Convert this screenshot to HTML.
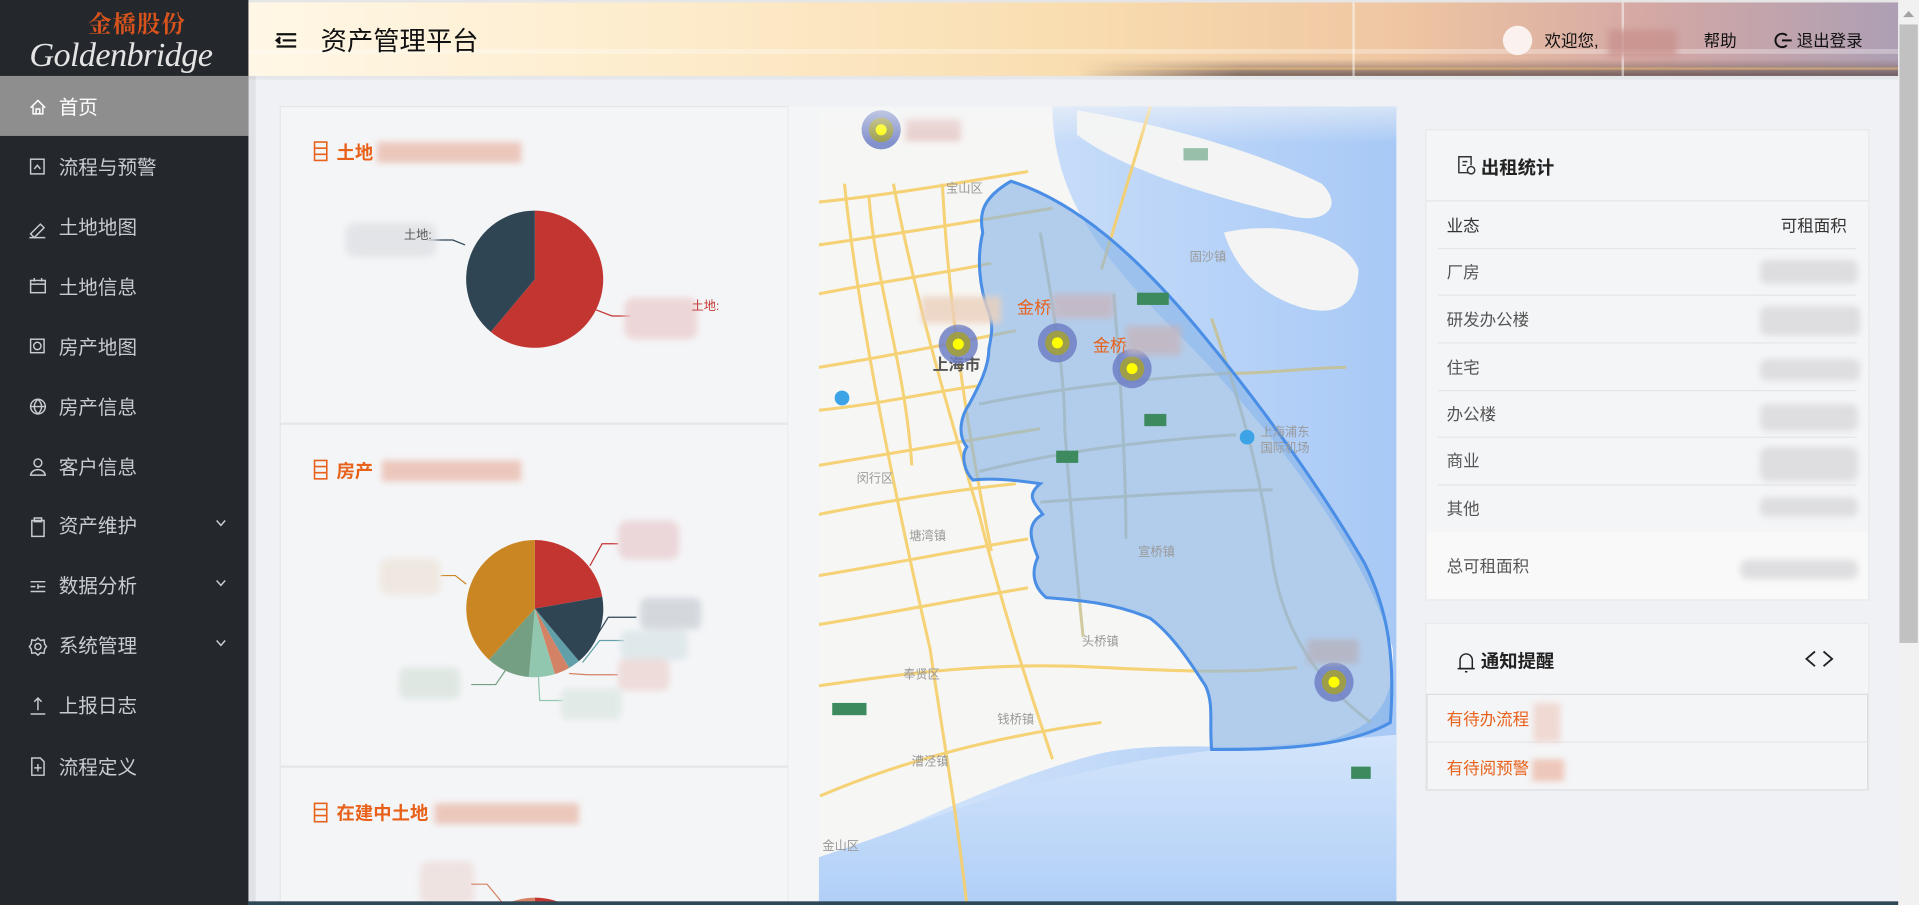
<!DOCTYPE html>
<html><head><meta charset="utf-8"><style>
html,body{margin:0;padding:0;width:1919px;height:905px;overflow:hidden;background:#f0f1f4}
svg{display:block}
text{font-family:"Liberation Sans","Noto Sans CJK SC",sans-serif}
</style></head><body>
<svg width="1919" height="905" viewBox="0 0 1568 739" preserveAspectRatio="none" xmlns="http://www.w3.org/2000/svg">
<defs>
<linearGradient id="hdr" x1="0" x2="1" y1="0" y2="0">
<stop offset="0" stop-color="#fff7e6"/><stop offset="0.25" stop-color="#fdeccc"/><stop offset="0.5" stop-color="#f9ddb0"/><stop offset="0.7" stop-color="#efc6a2"/><stop offset="0.85" stop-color="#d4a8a4"/><stop offset="1" stop-color="#ad9fb4"/></linearGradient>
<linearGradient id="city" x1="0" x2="0" y1="0" y2="1"><stop offset="0" stop-color="#8a6f6a" stop-opacity="0"/><stop offset="0.6" stop-color="#7a6460" stop-opacity="0.6"/><stop offset="1" stop-color="#5a4a4a" stop-opacity="0.8"/></linearGradient>
<linearGradient id="cityfade" x1="0" x2="1" y1="0" y2="0"><stop offset="0" stop-color="#fff" stop-opacity="0"/><stop offset="0.2" stop-color="#fff" stop-opacity="1"/></linearGradient>
<mask id="cm"><rect x="880" y="0" width="671" height="62" fill="url(#cityfade)"/></mask>
<linearGradient id="sea" x1="0" x2="1" y1="0" y2="0"><stop offset="0" stop-color="#dbe9fb"/><stop offset="1" stop-color="#a8c9f6"/></linearGradient>
<linearGradient id="seab" x1="0" x2="0" y1="0" y2="1"><stop offset="0" stop-color="#d4e5fb"/><stop offset="1" stop-color="#b0cff7"/></linearGradient>
<linearGradient id="fadeT" x1="0" x2="0" y1="0" y2="1"><stop offset="0" stop-color="#f4f5f7" stop-opacity="1"/><stop offset="1" stop-color="#f4f5f7" stop-opacity="0"/></linearGradient>
<filter id="bl" x="-30%" y="-30%" width="160%" height="160%"><feGaussianBlur stdDeviation="2.5"/></filter>
</defs>

<rect x="0" y="0" width="1568" height="739" fill="#f0f1f4"/>

<!-- header -->
<rect x="203" y="0" width="1348" height="62" fill="url(#hdr)"/>
<rect x="203" y="40" width="1348" height="4" fill="#fff" opacity="0.3"/>
<g mask="url(#cm)">
<rect x="880" y="48" width="671" height="14" fill="url(#city)"/>
<rect x="880" y="55" width="671" height="2" fill="#f0c070" opacity="0.5"/>
</g>
<rect x="1105" y="0" width="2" height="62" fill="#fff" opacity="0.5"/>
<rect x="1325" y="0" width="2" height="62" fill="#fff" opacity="0.5"/>
<rect x="203" y="0" width="1348" height="2" fill="#e6e6e6"/>
<rect x="203" y="62" width="1348" height="3" fill="#000" opacity="0.04"/>
<g stroke="#111" stroke-width="1.8" fill="none"><line x1="226" y1="28" x2="242" y2="28"/><line x1="231" y1="33" x2="242" y2="33"/><line x1="226" y1="38" x2="242" y2="38"/><path d="M229 30.5 L226 33 L229 35.5" fill="#111"/></g>
<text x="262" y="41" font-size="21.5" fill="#111">资产管理平台</text>
<circle cx="1240" cy="33" r="12" fill="#fbf2f0"/>
<text x="1262" y="38" font-size="13.5" fill="#111">欢迎您,</text>
<rect x="1314" y="24" width="56" height="22" fill="#c9928e" filter="url(#bl)" opacity="0.8"/>
<text x="1392" y="38" font-size="13.5" fill="#111">帮助</text>
<path d="M1460 29 A5.5 5.5 0 1 0 1460 37" stroke="#111" stroke-width="1.6" fill="none"/><line x1="1456" y1="33" x2="1464" y2="33" stroke="#111" stroke-width="1.6"/>
<text x="1468" y="38" font-size="13.5" fill="#111">退出登录</text>

<!-- scrollbar -->
<rect x="1551" y="0" width="17" height="739" fill="#f1f1f1"/>
<rect x="1552" y="20" width="15" height="505" fill="#c1c1c1"/>
<path d="M1555 14 L1559.5 9 L1564 14 Z" fill="#a3a3a3"/>

<!-- sidebar -->
<rect x="0" y="0" width="203" height="739" fill="#24282d"/>
<rect x="203" y="62" width="6" height="677" fill="#000" opacity="0.06"/>
<text x="72" y="26" font-size="19" font-weight="bold" fill="#d9531c" style="font-family:'Noto Serif CJK SC','Liberation Serif',serif" letter-spacing="1">金橋股份</text>
<text x="24" y="54" font-size="28" font-style="italic" fill="#e4e4e4" style="font-family:'Liberation Serif',serif" letter-spacing="-0.5">Goldenbridge</text>
<rect x="0" y="62" width="203" height="49" fill="#8e8e8e"/>
<g font-size="16" fill="#c8cbcf">
<text x="48" y="93" fill="#fff">首页</text>
<text x="48" y="142">流程与预警</text>
<text x="48" y="191">土地地图</text>
<text x="48" y="240">土地信息</text>
<text x="48" y="289">房产地图</text>
<text x="48" y="338">房产信息</text>
<text x="48" y="387">客户信息</text>
<text x="48" y="435">资产维护</text>
<text x="48" y="484">数据分析</text>
<text x="48" y="533">系统管理</text>
<text x="48" y="582">上报日志</text>
<text x="48" y="632">流程定义</text>
</g>
<g stroke="#c8cbcf" stroke-width="1.2" fill="none">
<path d="M25 88 L31 82 L37 88 M27 87 V93 H35 V87 M29.5 93 V89 H32.5 V93" stroke="#fff"/>
<rect x="25" y="130" width="11" height="12"/><path d="M28 138 L30.5 135 L33 138"/>
<path d="M25 191 L33 183 L36 186 L28 194 Z M24 194 H37"/>
<rect x="25" y="229" width="12" height="10"/><path d="M25 232 H37 M28 227 V230 M34 227 V230"/>
<rect x="25" y="277" width="11" height="11"/><circle cx="30.5" cy="282.5" r="3"/>
<circle cx="31" cy="332" r="6"/><path d="M25 332 H37 M31 326 C27 330 27 334 31 338 C35 334 35 330 31 326"/>
<circle cx="31" cy="378" r="3.2"/><path d="M25 388 C26 382 36 382 37 388 Z"/>
<rect x="26" y="425" width="10" height="13"/><path d="M28 423 H34 V426 H28 Z"/>
<path d="M25 475 H37 M25 479 H29 M31 479 H37 M25 483 H37 M31 477 V481"/>
<circle cx="31" cy="528" r="2.5"/><path d="M31 521 L33 523 L36 522.5 L36.5 526 L38 528 L36.5 530 L36 533.5 L33 533 L31 535 L29 533 L26 533.5 L25.5 530 L24 528 L25.5 526 L26 522.5 L29 523 Z"/>
<path d="M31 570 V580 M28 573 L31 570 L34 573 M25 583 H37"/>
<path d="M26 619 H33 L36 622 V633 H26 Z M31 624 V630 M28 627 H34"/>
<path d="M177 425 L180.5 429 L184 425 M177 474 L180.5 478 L184 474 M177 523 L180.5 527 L184 523"/>
</g>

<!-- left charts card -->
<rect x="229" y="87" width="415" height="652" fill="#f4f5f7" stroke="#e5e6e8"/>
<rect x="229" y="345" width="415" height="2" fill="#e6e7ea"/>
<rect x="229" y="625" width="415" height="2" fill="#e6e7ea"/>
<g stroke="#e8611a" stroke-width="1.3" fill="none">
<rect x="257" y="116" width="10" height="15"/><path d="M257 121 H267 M257 126 H267"/>
<rect x="257" y="376" width="10" height="15"/><path d="M257 381 H267 M257 386 H267"/>
<rect x="257" y="656" width="10" height="15"/><path d="M257 661 H267 M257 666 H267"/>
</g>
<g font-size="15" font-weight="bold" fill="#e8611a">
<text x="275" y="130">土地</text><text x="275" y="390">房产</text><text x="275" y="669">在建中土地</text>
</g>
<g filter="url(#bl)" opacity="0.75">
<rect x="308" y="116" width="118" height="17" fill="#e9b8a8"/>
<rect x="312" y="376" width="114" height="17" fill="#e9b8a8"/>
<rect x="355" y="656" width="118" height="17" fill="#e9b8a8"/>
</g>
<path d="M437 228 L437 172 A56 56 0 1 1 401 271 Z" fill="#c23531"/>
<path d="M437 228 L401 271 A56 56 0 0 1 437 172 Z" fill="#2f4554"/>
<path d="M380 200 L370 196 H350" stroke="#2f4554" fill="none"/>
<path d="M487 253 L500 258 H515" stroke="#c23531" fill="none"/>
<g filter="url(#bl)" opacity="0.8">
<rect x="282" y="182" width="75" height="28" rx="8" fill="#dfe1e4"/>
<rect x="510" y="243" width="60" height="34" rx="8" fill="#eccfd0"/>
</g>
<text x="330" y="195" font-size="10" fill="#555">土地:</text>
<text x="565" y="253" font-size="10" fill="#c23531">土地:</text>
<g transform="translate(437 497)">
<path d="M0 0 L0 -56 A56 56 0 0 1 55.1 -9.7 Z" fill="#c23531"/>
<path d="M0 0 L55.1 -9.7 A56 56 0 0 1 36 42.9 Z" fill="#2f4554"/>
<path d="M0 0 L36 42.9 A56 56 0 0 1 28 48.5 Z" fill="#61a0a8"/>
<path d="M0 0 L28 48.5 A56 56 0 0 1 16.4 53.5 Z" fill="#d48265"/>
<path d="M0 0 L16.4 53.5 A56 56 0 0 1 -4.9 55.8 Z" fill="#91c7ae"/>
<path d="M0 0 L-4.9 55.8 A56 56 0 0 1 -37.5 41.6 Z" fill="#749f83"/>
<path d="M0 0 L-37.5 41.6 A56 56 0 0 1 0 -56 Z" fill="#ca8622"/>
</g>
<g fill="none" stroke-width="1">
<path d="M482 462 L492 444 H505" stroke="#c23531"/>
<path d="M487 520 L497 504 H520" stroke="#2f4554"/>
<path d="M476 541 L490 523 H510" stroke="#61a0a8"/>
<path d="M465 550 L480 551 H505" stroke="#d48265"/>
<path d="M440 553 L441 572 H460" stroke="#91c7ae"/>
<path d="M414 546 L405 559 H385" stroke="#749f83"/>
<path d="M381 477 L372 470 H360" stroke="#ca8622"/>
</g>
<g filter="url(#bl)" opacity="0.85">
<rect x="505" y="425" width="50" height="32" rx="8" fill="#ead2d4"/>
<rect x="310" y="456" width="50" height="30" rx="8" fill="#efe6dd"/>
<rect x="523" y="488" width="50" height="26" rx="6" fill="#cfd4d9"/>
<rect x="507" y="515" width="55" height="24" rx="6" fill="#dce6e9"/>
<rect x="505" y="538" width="42" height="26" rx="6" fill="#edd8d5"/>
<rect x="458" y="562" width="50" height="26" rx="6" fill="#dfe9e5"/>
<rect x="326" y="545" width="50" height="26" rx="6" fill="#dce5e0"/>
<rect x="343" y="703" width="45" height="36" rx="8" fill="#eee0de"/>
</g>
<path d="M437 789 L437 733 A56 56 0 0 1 470 744 Z" fill="#c23531"/>
<path d="M437 789 L404 744 A56 56 0 0 1 437 733 Z" fill="#d48265"/>
<path d="M412 739 L398 722 H385" stroke="#d48265" fill="none"/>

<!-- map -->
<clipPath id="mc"><rect x="669" y="87" width="472" height="652"/></clipPath>
<g clip-path="url(#mc)">
<rect x="669" y="87" width="472" height="652" fill="#f6f6f4"/>
<path d="M860 87 L1141 87 L1141 739 L669 739 L669 700 C720 690 800 640 900 615 C950 605 1000 612 1060 610 C1120 600 1140 580 1138 530 C1120 460 1050 360 960 270 C900 210 860 160 860 87 Z" fill="url(#sea)"/>
<path d="M669 739 L669 700 C760 670 860 625 1000 612 L1141 600 L1141 739 Z" fill="url(#seab)"/>
<path d="M880 90 C940 100 1020 120 1080 150 C1100 170 1080 185 1050 175 C990 160 920 140 880 110 Z" fill="#f3f4f3"/>
<path d="M1000 190 C1040 180 1100 190 1110 220 C1110 250 1090 260 1060 250 C1030 240 1010 220 1000 190 Z" fill="#f3f4f3"/>
<g stroke="#f7cf6a" stroke-width="2.5" fill="none" opacity="0.9">
<path d="M669 165 C720 160 780 150 840 140"/>
<path d="M669 200 C740 190 800 180 860 170"/>
<path d="M669 240 C720 230 760 225 810 215"/>
<path d="M669 300 C730 290 780 280 830 270"/>
<path d="M669 335 C720 330 760 320 800 315"/>
<path d="M669 380 C730 370 790 360 850 350"/>
<path d="M669 420 C720 410 780 400 830 395"/>
<path d="M669 470 C730 460 780 450 840 440"/>
<path d="M669 510 C730 500 780 490 840 480"/>
<path d="M669 560 C740 550 810 540 900 545 C960 548 1010 550 1060 545"/>
<path d="M690 150 C700 250 730 400 760 530 C770 600 780 650 790 739"/>
<path d="M710 160 C715 230 740 300 745 380"/>
<path d="M730 150 C745 230 770 320 800 420 C820 500 840 560 860 620"/>
<path d="M770 150 C775 250 790 350 810 450"/>
<path d="M670 650 C740 620 820 600 900 590"/>
<path d="M940 87 L900 220"/>
</g>
<g stroke="#c9c08a" stroke-width="2.5" fill="none" opacity="0.8">
<path d="M800 330 C850 320 920 310 1000 305 C1040 305 1070 300 1100 300"/>
<path d="M800 385 C860 370 930 360 1010 355"/>
<path d="M850 410 C920 405 1000 400 1040 400"/>
<path d="M850 190 C860 250 870 300 870 350 C875 420 880 470 885 520"/>
<path d="M910 240 C915 300 920 380 920 440"/>
<path d="M990 260 C1010 320 1030 380 1040 460 C1050 520 1080 560 1120 590"/>
</g>
<path d="M826 148 C880 165 930 210 980 270 C1030 330 1080 400 1115 460 C1135 500 1140 540 1136 590 C1110 605 1070 612 1000 612 L990 612 C988 590 992 575 985 560 C975 545 960 520 940 505 C910 492 880 490 855 488 C845 480 842 468 848 455 C842 440 838 428 852 420 C845 410 838 405 850 395 C830 392 810 390 795 392 C788 385 785 372 790 365 C782 355 785 340 792 330 C800 315 808 300 808 285 C810 275 812 265 808 255 C800 235 798 210 803 190 C800 175 802 162 826 148 Z" fill="#86b2e6" fill-opacity="0.6" stroke="#4a8ee6" stroke-width="2.5"/>
<g font-size="10" fill="#999">
<text x="773" y="157">宝山区</text><text x="972" y="213">固沙镇</text><text x="700" y="394">闵行区</text>
<text x="743" y="441">塘湾镇</text><text x="930" y="454">宣桥镇</text><text x="884" y="527">头桥镇</text>
<text x="738" y="554">奉贤区</text><text x="815" y="591">钱桥镇</text><text x="745" y="625">漕泾镇</text><text x="672" y="694">金山区</text>
<text x="1030" y="356">上海浦东</text><text x="1030" y="369">国际机场</text>
</g>
<text x="762" y="302" font-size="13" font-weight="bold" fill="#555">上海市</text>
<g fill="#3d8a5e"><rect x="929" y="239" width="26" height="10"/><rect x="935" y="338" width="18" height="10"/><rect x="863" y="368" width="18" height="10"/><rect x="680" y="574" width="28" height="10"/><rect x="1104" y="626" width="16" height="10"/><rect x="967" y="121" width="20" height="10" opacity="0.5"/></g>
<circle cx="688" cy="325" r="6" fill="#3ba3e6"/><circle cx="1019" cy="357" r="6" fill="#3ba3e6"/>
<g>
<circle cx="720" cy="106" r="16" fill="#6e7fc4" opacity="0.85"/><circle cx="720" cy="106" r="10" fill="#9e9e4a"/><circle cx="720" cy="106" r="4.5" fill="#ffff00"/>
<circle cx="783" cy="281" r="16" fill="#6e7fc4" opacity="0.85"/><circle cx="783" cy="281" r="10" fill="#9e9e4a"/><circle cx="783" cy="281" r="4.5" fill="#ffff00"/>
<circle cx="864" cy="280" r="16" fill="#6e7fc4" opacity="0.85"/><circle cx="864" cy="280" r="10" fill="#9e9e4a"/><circle cx="864" cy="280" r="4.5" fill="#ffff00"/>
<circle cx="925" cy="301" r="16" fill="#6e7fc4" opacity="0.85"/><circle cx="925" cy="301" r="10" fill="#9e9e4a"/><circle cx="925" cy="301" r="4.5" fill="#ffff00"/>
<circle cx="1090" cy="557" r="16" fill="#6e7fc4" opacity="0.85"/><circle cx="1090" cy="557" r="10" fill="#9e9e4a"/><circle cx="1090" cy="557" r="4.5" fill="#ffff00"/>
</g>
<g font-size="14" fill="#e8611a"><text x="831" y="256">金桥</text><text x="893" y="287">金桥</text></g>
<g filter="url(#bl)" opacity="0.8">
<rect x="740" y="97" width="45" height="18" fill="#e3c0bd"/>
<rect x="753" y="242" width="65" height="22" fill="#ecd0bc"/>
<rect x="860" y="240" width="50" height="20" fill="#c8b6c0"/>
<rect x="920" y="266" width="45" height="24" fill="#c5b5bd"/>
<rect x="1068" y="522" width="42" height="20" fill="#b6b2be"/>
</g>
<rect x="669" y="87" width="472" height="30" fill="url(#fadeT)" opacity="0.6"/>
</g>
<rect x="644" y="87" width="25" height="652" fill="#f4f5f7"/>

<!-- right rental card -->
<rect x="1165" y="106" width="362" height="384" fill="#f4f5f7" stroke="#e8e9eb"/>
<rect x="1166" y="434" width="360" height="55" fill="#f9f9f9"/>
<line x1="1165" y1="164" x2="1527" y2="164" stroke="#e4e5e7"/>
<g stroke="#333" stroke-width="1.2" fill="none"><path d="M1200 141 H1192 V128 H1202 V135"/><path d="M1195 132 H1199 M1195 135 H1198"/><circle cx="1202" cy="139" r="3"/></g>
<text x="1210" y="142" font-size="15" font-weight="bold" fill="#222">出租统计</text>
<g stroke="#e4e5e7" stroke-width="1">
<line x1="1175" y1="203" x2="1517" y2="203"/><line x1="1175" y1="241" x2="1517" y2="241"/><line x1="1175" y1="280" x2="1517" y2="280"/><line x1="1175" y1="319" x2="1517" y2="319"/><line x1="1175" y1="357" x2="1517" y2="357"/><line x1="1175" y1="396" x2="1517" y2="396"/>
</g>
<g font-size="13.5" fill="#555">
<text x="1182" y="189" fill="#333">业态</text><text x="1509" y="189" fill="#333" text-anchor="end">可租面积</text>
<text x="1182" y="227">厂房</text><text x="1182" y="266">研发办公楼</text><text x="1182" y="305">住宅</text>
<text x="1182" y="343">办公楼</text><text x="1182" y="381">商业</text><text x="1182" y="420">其他</text>
<text x="1182" y="467">总可租面积</text>
</g>
<g filter="url(#bl)" opacity="0.9" fill="#dcdcde">
<rect x="1438" y="212" width="80" height="20" rx="6"/><rect x="1438" y="250" width="82" height="24" rx="6"/>
<rect x="1438" y="293" width="82" height="18" rx="6"/><rect x="1438" y="330" width="80" height="22" rx="6"/>
<rect x="1438" y="365" width="80" height="28" rx="6"/><rect x="1438" y="406" width="80" height="16" rx="6"/>
<rect x="1422" y="457" width="96" height="16" rx="6"/>
</g>

<!-- notice card -->
<rect x="1165" y="509" width="362" height="136" fill="#f4f5f7" stroke="#e8e9eb"/>
<rect x="1166" y="567" width="360" height="78" fill="#f4f5f7" stroke="#dcdde0"/>
<line x1="1166" y1="606" x2="1526" y2="606" stroke="#e4e5e7"/>
<g stroke="#222" stroke-width="1.2" fill="none"><path d="M1193 546 V539 A5 5 0 0 1 1203 539 V546 Z"/><path d="M1191 546 H1205 M1197 548.5 H1199"/></g>
<text x="1210" y="545" font-size="15" font-weight="bold" fill="#222">通知提醒</text>
<path d="M1483 532 L1476 538 L1483 544 M1490 532 L1497 538 L1490 544" stroke="#222" stroke-width="1.5" fill="none"/>
<g font-size="13.5" fill="#e8611a"><text x="1182" y="592">有待办流程</text><text x="1182" y="632">有待阅预警</text></g>
<g filter="url(#bl)" opacity="0.8"><rect x="1253" y="574" width="22" height="32" fill="#efd3ca"/><rect x="1252" y="620" width="26" height="18" fill="#ecbcac"/></g>

<rect x="203" y="736" width="1348" height="3" fill="#2f4858"/>
</svg>
</body></html>
